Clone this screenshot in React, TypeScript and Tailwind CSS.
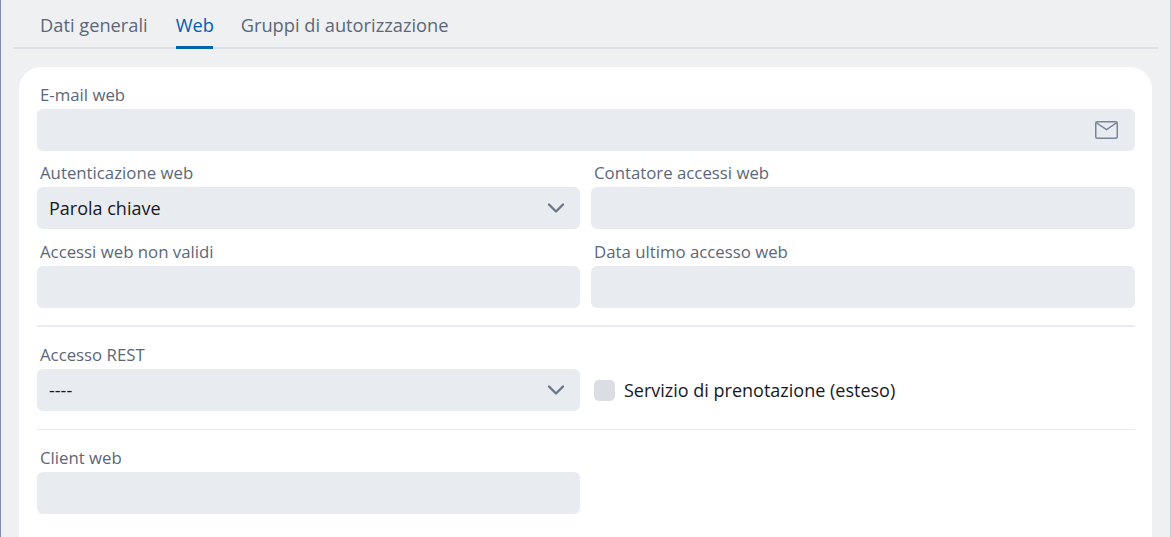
import { ChevronDown } from 'lucide-react';

const font = { fontFamily: '"Open Sans", sans-serif' };

const Label = ({ text }: { text: string }) => (
  <div className="h-[24px] pl-[3px] text-[16.8px] leading-[20px] text-[#5b6779]">{text}</div>
);

const Field = ({ label }: { label: string }) => (
  <div className="flex flex-col">
    <Label text={label} />
    <div className="h-[42px] rounded-[6px] bg-[#e8ebef]" />
  </div>
);

const Select = ({ label, value }: { label: string; value: string }) => (
  <div className="flex flex-col">
    <Label text={label} />
    <div className="flex h-[42px] items-center justify-between rounded-[6px] bg-[#e8ebef] pl-[12px] pr-[10px]">
      <span className="text-[18px] text-[#16191f]">{value}</span>
      <ChevronDown size={28} strokeWidth={2} className="text-[#6b7688]" />
    </div>
  </div>
);

const MailIcon = () => (
  <svg width="23" height="18" viewBox="0 0 23 18" fill="none" stroke="#77859a" strokeWidth="1.5">
    <rect x="0.75" y="0.75" width="21.5" height="16.5" rx="1.5" />
    <path d="M1 1.5 L11.5 8.5 L22 1.5" />
  </svg>
);

export default function App() {
  return (
    <div className="h-[537px] w-[1171px] overflow-hidden border-x border-l-[#7f8ea6] border-r-[#c3cad6] bg-[#eef0f2] pl-[12px] pr-[12px]" style={font}>
      <div className="flex h-[49px] gap-[28px] border-b-2 border-[#dcdfe5] pl-[27px] text-[18.25px]">
        <div className="flex h-[49px] items-center text-[#5b6779]">Dati generali</div>
        <div className="flex h-[49px] w-[37px] items-center border-b-[3px] border-[#0061ad] pt-[3px] text-[#0061ad]">Web</div>
        <div className="flex h-[49px] items-center text-[#5b6779]">Gruppi di autorizzazione</div>
      </div>
      <div className="ml-[6px] mr-[6px] mt-[18px] h-[500px] rounded-[22px] bg-white pl-[18px] pr-[17px] pt-[18px]">
        <div className="relative">
          <Field label="E-mail web" />
          <div className="absolute right-[17px] top-[36px]">
            <MailIcon />
          </div>
        </div>
        <div className="mt-[12px] grid grid-cols-[543px_544px] gap-x-[11px] gap-y-[13px]">
          <Select label="Autenticazione web" value="Parola chiave" />
          <Field label="Contatore accessi web" />
          <Field label="Accessi web non validi" />
          <Field label="Data ultimo accesso web" />
        </div>
        <div className="mt-[17px] h-[2px] bg-[#e8ebef]" />
        <div className="mt-[18px] grid grid-cols-[543px_544px] gap-x-[11px]">
          <Select label="Accesso REST" value="----" />
          <div className="flex items-center gap-[9px] pl-[3px] pt-[24px]">
            <div className="h-[21px] w-[21px] rounded-[5px] bg-[#dadee4]" />
            <span className="text-[18px] text-[#16191f]">Servizio di prenotazione (esteso)</span>
          </div>
        </div>
        <div className="mt-[18px] h-[1px] bg-[#e8ebef]" />
        <div className="mt-[18px] grid grid-cols-[543px_544px] gap-x-[11px]">
          <Field label="Client web" />
        </div>
      </div>
    </div>
  );
}
